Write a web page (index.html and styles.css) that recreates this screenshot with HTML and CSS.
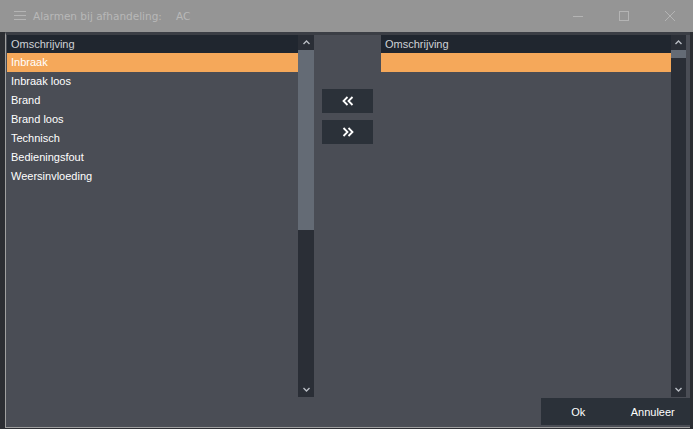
FILE: index.html
```html
<!DOCTYPE html>
<html lang="nl">
<head>
    <meta charset="UTF-8">
    <title>Alarmen bij afhandeling</title>
    <link rel="stylesheet" href="styles.css">
</head>
<body>
    <div class="titlebar">
        <svg class="menu-icon" width="12" height="10" viewBox="0 0 12 10">
            <path d="M0 0.5H12M0 4.5H12M0 8.5H12" stroke="#b4b4b4" stroke-width="1"/>
        </svg>
        <span class="title">Alarmen bij afhandeling:</span>
        <span class="title title-code">AC</span>
        <div class="window-controls">
            <svg width="12" height="12" viewBox="0 0 12 12"><path d="M1 6.5H11" stroke="#b4b4b4"/></svg>
            <svg width="12" height="12" viewBox="0 0 12 12"><rect x="1.5" y="1.5" width="9" height="9" fill="none" stroke="#b4b4b4"/></svg>
            <svg width="12" height="12" viewBox="0 0 12 12"><path d="M1 1L11 11M11 1L1 11" stroke="#b4b4b4"/></svg>
        </div>
    </div>

    <div class="frame">
        <div class="content">
            <div class="list list-left">
                <div class="list-body">
                    <div class="list-header">Omschrijving</div>
                    <div class="row selected">Inbraak</div>
                    <div class="row">Inbraak loos</div>
                    <div class="row">Brand</div>
                    <div class="row">Brand loos</div>
                    <div class="row">Technisch</div>
                    <div class="row">Bedieningsfout</div>
                    <div class="row">Weersinvloeding</div>
                </div>
                <div class="scrollbar">
                    <div class="arrow arrow-up">
                        <svg width="7" height="5" viewBox="0 0 7 5"><path d="M0.5 4L3.5 1L6.5 4" fill="none" stroke="#b9bdc4" stroke-width="1.4"/></svg>
                    </div>
                    <div class="track">
                        <div class="thumb thumb-left"></div>
                    </div>
                    <div class="arrow arrow-down">
                        <svg width="7" height="5" viewBox="0 0 7 5"><path d="M0.5 1L3.5 4L6.5 1" fill="none" stroke="#b9bdc4" stroke-width="1.4"/></svg>
                    </div>
                </div>
            </div>

            <div class="transfer">
                <button class="transfer-btn">
                    <svg width="12" height="10" viewBox="0 0 12 10"><path d="M5.5 1L1.5 5L5.5 9M10.5 1L6.5 5L10.5 9" fill="none" stroke="#fff" stroke-width="1.8"/></svg>
                </button>
                <button class="transfer-btn">
                    <svg width="12" height="10" viewBox="0 0 12 10"><path d="M1.5 1L5.5 5L1.5 9M6.5 1L10.5 5L6.5 9" fill="none" stroke="#fff" stroke-width="1.8"/></svg>
                </button>
            </div>

            <div class="list list-right">
                <div class="list-body">
                    <div class="list-header">Omschrijving</div>
                    <div class="row selected"></div>
                </div>
                <div class="scrollbar">
                    <div class="arrow arrow-up">
                        <svg width="7" height="5" viewBox="0 0 7 5"><path d="M0.5 4L3.5 1L6.5 4" fill="none" stroke="#b9bdc4" stroke-width="1.4"/></svg>
                    </div>
                    <div class="track">
                        <div class="thumb thumb-right"></div>
                    </div>
                    <div class="arrow arrow-down">
                        <svg width="7" height="5" viewBox="0 0 7 5"><path d="M0.5 1L3.5 4L6.5 1" fill="none" stroke="#b9bdc4" stroke-width="1.4"/></svg>
                    </div>
                </div>
            </div>
        </div>

        <div class="footer">
            <div class="footer-buttons">
                <button class="footer-btn">Ok</button>
                <button class="footer-btn">Annuleer</button>
            </div>
        </div>
    </div>
</body>
</html>
```

FILE: styles.css
```css
:root {
    --body-color: #4a4d55;
    --header-color: #20262f;
    --dark-color: #2a2e36;
    --button-color: #2b3139;
    --accent-color: #f5a85a;
}

* {
    box-sizing: border-box;
    margin: 0;
    padding: 0;
}

body {
    width: 693px;
    height: 429px;
    overflow: hidden;
    background-color: #2c2e33;
    font-family: 'Liberation Sans', Arial, sans-serif;
    font-size: 11px;
    color: #fff;
}

.titlebar {
    display: flex;
    align-items: center;
    height: 32px;
    background-color: #959595;
    padding-left: 14px;
}

.menu-icon {
    margin-right: 7px;
}

.title {
    color: #b8b8b8;
    font-family: 'DejaVu Sans', sans-serif;
    font-size: 10.5px;
}

.title-code {
    margin-left: 14px;
}

.window-controls {
    display: flex;
    gap: 34px;
    margin-left: auto;
    margin-right: 17px;
}

.frame {
    display: flex;
    flex-direction: column;
    height: 396px;
    margin-left: 5px;
    margin-right: 3px;
    background-color: var(--body-color);
    border-top: 3px solid #3b3e45;
    border-left: 1px solid #a0a0a0;
    border-bottom: 1px solid #a0a0a0;
}

.content {
    display: flex;
    height: 362px;
    padding-left: 1px;
}

.list {
    display: flex;
    height: 100%;
}

.list-left .list-body {
    width: 291px;
}

.list-right .list-body {
    width: 290px;
}

.list-left .scrollbar {
    width: 16px;
}

.list-right .scrollbar {
    width: 15px;
}

.list-body {
    background-color: var(--body-color);
}

.list-header {
    height: 18px;
    line-height: 18px;
    padding-left: 4px;
    background-color: var(--header-color);
    color: #cfd2d6;
}

.row {
    height: 19px;
    line-height: 19px;
    padding-left: 4px;
    white-space: nowrap;
}

.row.selected {
    background-color: var(--accent-color);
}

.scrollbar {
    display: flex;
    flex-direction: column;
    background-color: var(--dark-color);
}

.arrow {
    display: flex;
    justify-content: center;
    align-items: center;
    height: 15px;
}

.track {
    flex: 1;
}

.thumb {
    background-color: #646b75;
}

.thumb-left {
    height: 180px;
}

.thumb-right {
    height: 8px;
}

.transfer {
    display: flex;
    flex-direction: column;
    gap: 7px;
    width: 67px;
    padding: 54px 0 0 8px;
}

.transfer-btn {
    display: flex;
    justify-content: center;
    align-items: center;
    width: 51px;
    height: 24px;
    border: none;
    background-color: var(--button-color);
}

.footer {
    display: flex;
    justify-content: flex-end;
    height: 30px;
    padding-top: 1px;
}

.footer-buttons {
    display: flex;
    height: 27px;
    width: 149px;
    background-color: var(--button-color);
}

.footer-btn {
    width: 50%;
    border: none;
    background: none;
    color: #fff;
    font-family: 'Liberation Sans', Arial, sans-serif;
    font-size: 11px;
}
```
